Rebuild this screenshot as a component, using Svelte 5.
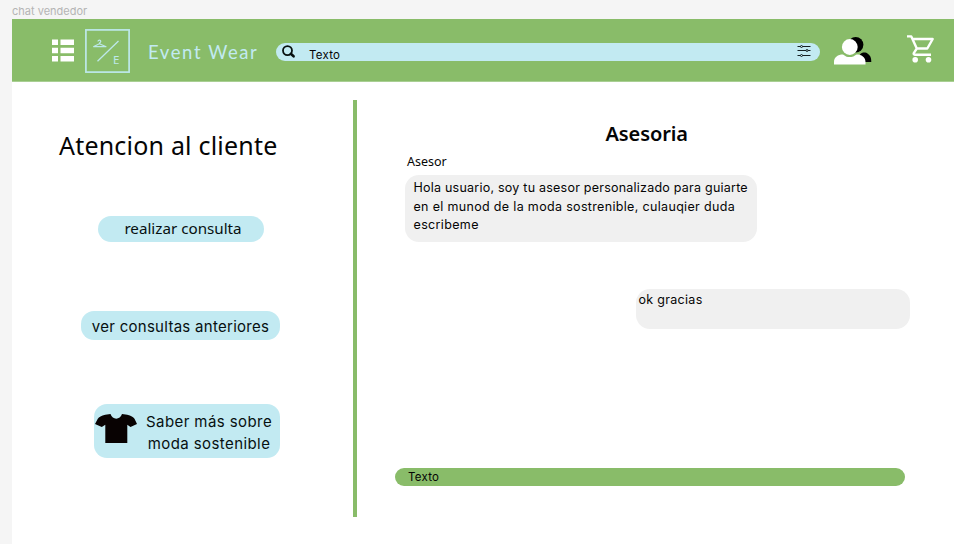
<script>
  const messageLines = [
    'Hola usuario, soy tu asesor personalizado para guiarte',
    'en el munod de la moda sostrenible, culauqier duda',
    'escribeme'
  ];
</script>

<div class="canvas">
  <div class="label">chat vendedor</div>
  <div class="frame">
    <header>
      <svg class="menu" width="22" height="23" viewBox="0 0 22 23" fill="#fff">
        <path d="M0 .5h6v5.500H0zM8.500.5H22v5.500H8.500zM0 8.700h6v5.500H0zM8.500 8.700H22v5.500H8.500zM0 17h6v5.500H0zM8.500 17H22v5.500H8.500z" />
      </svg>
      <svg class="logo" width="45" height="44" viewBox="0 0 45 44" fill="none" stroke="#bde8ea">
        <rect x=".9" y=".9" width="43.200" height="42.200" stroke-width="1.700" />
        <path d="M33.500 12 12.500 32.300" stroke-width="1.300" />
        <path d="M13 12.500c0-1.900 3.200-1.700 2.700.1-.2.900-1.300.9-1.300 2.100L8.300 17.700h13L14.400 14.700" stroke-width="1.200" />
        <text x="28" y="35" fill="#bde8ea" stroke="none">E</text>
      </svg>
      <span class="brand">Event Wear</span>
      <div class="search">
        <svg width="14" height="14" viewBox="0 0 14 14" fill="none" stroke="#071010">
          <circle cx="5.500" cy="5.600" r="4.500" stroke-width="1.800" />
          <path d="m8.800 8.800 2.800 2.500" stroke-width="2.600" stroke-linecap="round" />
        </svg>
        <span>Texto</span>
        <svg class="tune" width="14" height="12" viewBox="0 0 14 12" fill="#c2eaf2" stroke="#152022">
          <path d="M.5 1.500h13M.5 5.500h13M.5 10.500h13" stroke-width="1.100" />
          <circle cx="4.500" cy="1.500" r="1" /><circle cx="10" cy="5.500" r="1" /><circle cx="4.500" cy="10.500" r="1" />
        </svg>
      </div>
      <svg class="people" width="38" height="28" viewBox="0 0 38 28">
        <circle cx="21.700" cy="7.800" r="7.700" />
        <path d="M26 17.500c2-2.500 6-2.500 8-.5 3 2 3.300 5 3.300 8H28z" />
        <path d="M7 18c5 3 14 3 18 0l5 4-4 4H8z" />
        <g fill="#fff">
          <circle cx="15.800" cy="10" r="7.900" />
          <path d="M0 27.500V25c0-5 4-7.500 9-7.500 4 3.400 9.500 3.400 13.500 0 5 0 9 2.500 9 7.500v2.500z" />
        </g>
      </svg>
      <svg class="cart" width="28" height="28" viewBox="0 0 28 28" fill="none" stroke="#fff" stroke-width="2.400">
        <path d="M0 1.400h4.300l5.500 12.100h10.500L25.700 4H5.500M9.800 13.500l-3 4.600c-.4.900 0 1.700 1 1.700H24" stroke-linejoin="round" />
        <g fill="#fff" stroke="none"><circle cx="8.200" cy="24.700" r="2.800" /><circle cx="21.500" cy="24.700" r="2.800" /></g>
      </svg>
    </header>

    <main>
      <aside>
        <h1>Atencion al cliente</h1>
        <button class="ask">realizar consulta</button>
        <button class="history">ver consultas anteriores</button>
        <button class="learn">
          <svg width="42" height="30" viewBox="0 0 42 30" fill="#080202">
            <path d="M10.300.8 15.500 0c2 6.200 9.500 6.200 11.500 0l5.200.8c4 1 6 2 7.300 4L42 10l-6.500 3-3.200-2.300V29H10.300V10.700L6.800 13 0 10l2.800-5.200C4 2.800 6.300 1.800 10.300.8z" />
          </svg>
          <span>Saber más sobre<br />moda sostenible</span>
        </button>
      </aside>
      <div class="divider"></div>
      <section>
        <h2>Asesoria</h2>
        <div class="who">Asesor</div>
        <div class="bubble advisor">
          {#each messageLines as line, i}
            <div class="line{i}">{line}</div>
          {/each}
        </div>
        <div class="bubble user">ok gracias</div>
        <div class="entry">Texto</div>
      </section>
    </main>
  </div>
</div>

<style>
  .canvas {
    box-sizing: border-box;
    width: 954px;
    height: 544px;
    overflow: hidden;
    padding-left: 12px;
    background: #f5f5f5;
    color: #050505;
    font-family: Inter, "Open Sans", sans-serif;
    white-space: nowrap;
  }
  .label {
    height: 18.700px;
    line-height: 23px;
    font-size: 11px;
    color: #b4b4b4;
  }
  .frame { height: 526px; background: #fff; }
  header {
    display: flex;
    align-items: flex-start;
    box-sizing: border-box;
    height: 63.800px;
    padding-left: 40px;
    border-bottom: 1px solid #a9cf93;
    background: #89bc69;
  }
  header > * { flex: none; }
  .menu { margin-top: 20.300px; }
  .logo { margin: 10.300px 0 0 11px; }
  .logo text { font: 11.500px "Noto Sans", sans-serif; }
  .brand {
    width: 128px;
    margin: 19.300px 0 0 18px;
    font: 400 18.500px/28px Lato, sans-serif;
    letter-spacing: 1.600px;
    color: #c2eaf2;
  }
  .search {
    display: flex;
    align-items: center;
    box-sizing: border-box;
    width: 544px;
    height: 18px;
    margin-top: 24.300px;
    padding: 0 9px 0 6px;
    border-radius: 9px;
    background: #c2eaf2;
    font-size: 11.500px;
    letter-spacing: 0.25px;
  }
  .search span { margin: 7px 0 0 13px; }
  .tune { margin: -2px 0 0 auto; }
  .people { margin: 18.300px 0 0 14px; }
  .cart { margin: 16.300px 0 0 35px; }
  main { display: flex; height: 461px; }
  aside {
    display: flex;
    flex-direction: column;
    align-items: flex-start;
    width: 341px;
  }
  h1 {
    margin: 44.500px 0 0 47px;
    font: 400 25px/36px "Noto Sans", sans-serif;
    letter-spacing: 0.2px;
  }
  button {
    padding: 0;
    border: 0;
    background: #c2eaf2;
    color: #071010;
    font: 15px/22px Inter, sans-serif;
    white-space: nowrap;
  }
  .ask {
    width: 166px;
    height: 26.500px;
    margin: 53px 0 0 86px;
    padding: 0 0 2px 4px;
    border-radius: 13px;
    font: 15.200px/24px "Noto Sans", sans-serif;
  }
  .history {
    width: 199px;
    height: 29.500px;
    margin: 68.500px 0 0 69px;
    padding-top: 3px;
    border-radius: 13px;
    letter-spacing: 0.28px;
  }
  .learn {
    display: flex;
    width: 186px;
    height: 54.500px;
    margin: 63.500px 0 0 82px;
    padding: 7px 0 0 1px;
    border-radius: 13px;
    letter-spacing: 0.42px;
  }
  .learn svg { margin: 3px 9px 0 0; }
  .learn > span { width: 126px; }
  .divider {
    width: 4px;
    height: 417.500px;
    margin-top: 17.500px;
    background: #89bc69;
  }
  section {
    display: flex;
    flex-direction: column;
    align-items: flex-start;
    flex: 1;
    padding-left: 38px;
    font-size: 12.500px;
  }
  h2 {
    margin: 38px 0 0 210.500px;
    font: 600 20px/28px "Noto Sans", sans-serif;
    letter-spacing: -0.1px;
  }
  .who {
    margin: 5px 0 0 12px;
    font: 12.500px/18px "Noto Sans", sans-serif;
  }
  .bubble {
    box-sizing: border-box;
    border-radius: 14px;
    background: #f0f0f0;
  }
  .advisor {
    width: 352px;
    height: 67px;
    margin: 3.500px 0 0 10px;
    padding: 4px 0 0 8.500px;
    line-height: 18.600px;
  }
  .line0 { letter-spacing: 0.23px; }
  .line1 { letter-spacing: 0.33px; }
  .line2 { letter-spacing: 0.35px; }
  .user {
    width: 274px;
    height: 40px;
    margin: 47px 0 0 240.500px;
    padding: 2px 0 0 3px;
    line-height: 18px;
    letter-spacing: 0.3px;
  }
  .entry {
    box-sizing: border-box;
    width: 510px;
    height: 18px;
    margin-top: 139px;
    padding-left: 13px;
    border-radius: 9px;
    background: #89bc69;
    font-size: 11.500px;
    line-height: 18px;
    letter-spacing: 0.25px;
  }
</style>
